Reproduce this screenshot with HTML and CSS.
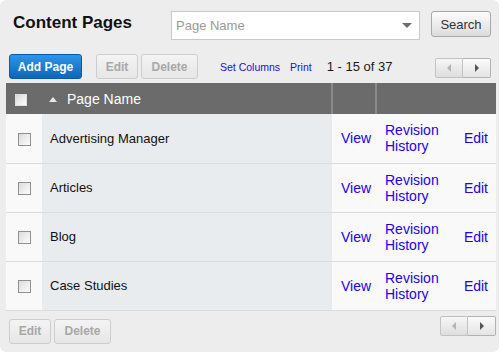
FILE: index.html
```html
<!DOCTYPE html>
<html>
<head>
<meta charset="utf-8">
<title>Content Pages</title>
<link rel="stylesheet" href="styles.css">
</head>
<body>
<div class="panel">
	<div class="top">
		<h1 class="title">Content Pages</h1>
		<div class="picker">
			<span class="placeholder">Page Name</span>
			<span class="caret"></span>
		</div>
		<button class="btn">Search</button>
	</div>

	<div class="toolbar">
		<button class="btn primary">Add Page</button>
		<button class="btn off edit-btn">Edit</button>
		<button class="btn off">Delete</button>
		<a class="small-link cols" href="#">Set Columns</a>
		<a class="small-link" href="#">Print</a>
		<span class="count">1 - 15 of 37</span>
		<div class="pager">
			<span class="pg prev"><i class="tri left"></i></span><span class="pg next"><i class="tri right"></i></span>
		</div>
	</div>

	<table class="grid">
		<thead>
			<tr>
				<th class="c-check"><span class="box"></span></th>
				<th class="c-name"><span class="sort"></span>Page Name</th>
				<th class="c-view"></th>
				<th class="c-acts"></th>
			</tr>
		</thead>
		<tbody>
			<tr>
				<td class="c-check"><span class="box"></span></td>
				<td class="c-name">Advertising Manager</td>
				<td class="c-view"><a href="#">View</a></td>
				<td class="c-acts"><div class="acts"><a href="#">Revision<br>History</a><a href="#">Edit</a></div></td>
			</tr>
			<tr>
				<td class="c-check"><span class="box"></span></td>
				<td class="c-name">Articles</td>
				<td class="c-view"><a href="#">View</a></td>
				<td class="c-acts"><div class="acts"><a href="#">Revision<br>History</a><a href="#">Edit</a></div></td>
			</tr>
			<tr>
				<td class="c-check"><span class="box"></span></td>
				<td class="c-name">Blog</td>
				<td class="c-view"><a href="#">View</a></td>
				<td class="c-acts"><div class="acts"><a href="#">Revision<br>History</a><a href="#">Edit</a></div></td>
			</tr>
			<tr>
				<td class="c-check"><span class="box"></span></td>
				<td class="c-name">Case Studies</td>
				<td class="c-view"><a href="#">View</a></td>
				<td class="c-acts"><div class="acts"><a href="#">Revision<br>History</a><a href="#">Edit</a></div></td>
			</tr>
		</tbody>
	</table>

	<div class="bottom">
		<button class="btn off edit-btn">Edit</button>
		<button class="btn off">Delete</button>
		<div class="pager low">
			<span class="pg prev"><i class="tri left"></i></span><span class="pg next"><i class="tri right"></i></span>
		</div>
	</div>
</div>
</body>
</html>
```

FILE: styles.css
```css
*
{
	box-sizing: border-box;
}
body
{
	margin: 0;
	background: #ffffff;
	font-family: "Liberation Sans", Arial, sans-serif;
	color: #1a1a1a;
}
.panel{
	width: 499px;
	height: 352px;
	background: #ededed;
	border-radius: 6px;
	padding: 11px 3px 0 6px;
}

/* top row */
.top{
	display: flex;
	align-items: flex-start;
	height: 39px;
}
.title{
	margin: 2px 0 0 7px;
	font-size: 17px;
	font-weight: bold;
	color: #111;
	width: 158px;
}
.picker{
	width: 249px;
	height: 29px;
	background: #fff;
	border: 1px solid #c9c9c9;
	display: flex;
	align-items: center;
	justify-content: space-between;
	padding: 0 7px 0 4px;
}
.placeholder{
	color: #9a9a9a;
	font-size: 13px;
}
.caret{
	width: 0;
	height: 0;
	border-left: 5px solid transparent;
	border-right: 5px solid transparent;
	border-top: 5px solid #6e6e6e;
}
.btn{
	font-family: inherit;
	font-size: 12px;
	font-weight: bold;
	height: 25px;
	padding: 0;
	white-space: nowrap;
	border: 1px solid #a9a9a9;
	border-radius: 3px;
	background: linear-gradient(#fdfdfd, #dcdcdc);
	color: #333;
}
.top .btn{
	margin-left: 11px;
	width: 60px;
	height: 26px;
	font-weight: normal;
	font-size: 13px;
}
.btn.off{
	color: #a8a8a8;
	border-color: #cdcdcd;
	background: linear-gradient(#f4f4f4, #e6e6e6);
}
.btn.primary{
	width: 73px;
	margin-left: 3px;
	color: #fff;
	border-color: #0a5aa8;
	background: linear-gradient(#2f95e6, #0b66bd);
}

/* toolbar */
.toolbar{
	display: flex;
	align-items: center;
	height: 33px;
}
.toolbar .edit-btn{
	margin-left: 14px;
	width: 42px;
}
.toolbar .btn.off{
	margin-right: 3px;
}
.toolbar .btn.off + .btn.off{
	width: 57px;
}
.small-link{
	font-size: 10.5px;
	color: #1a0ddf;
	text-decoration: none;
	margin-left: 10px;
}
.small-link.cols{
	margin-left: 19px;
}
.count{
	font-size: 13px;
	margin-left: 15px;
}
.pager{
	margin-left: auto;
	margin-right: 5px;
	display: flex;
	margin-top: 2px;
}
.pg{
	width: 28px;
	height: 20px;
	border: 1px solid #c3c3c3;
	background: linear-gradient(#f6f6f6, #dedede);
	display: flex;
	align-items: center;
	justify-content: center;
}
.pg.prev{
	border-radius: 2px 0 0 2px;
}
.pg.next{
	border-left: 0;
	border-color: #b2b2b2;
	background: linear-gradient(#fbfbfb, #e4e4e4);
	border-radius: 0 2px 2px 0;
}
.tri{
	width: 0;
	height: 0;
	border-top: 4px solid transparent;
	border-bottom: 4px solid transparent;
}
.tri.left{
	border-right: 4px solid #b4b4b4;
}
.tri.right{
	border-left: 4px solid #555;
}

/* table */
.grid{
	width: 490px;
	border-collapse: collapse;
	table-layout: fixed;
	margin-top: 0;
	font-size: 13px;
}
.grid th{
	background: #6b6b6b;
	height: 31px;
	color: #fff;
	font-weight: normal;
	font-size: 14px;
	text-align: left;
	padding: 0;
}
.grid th.c-view,
.grid th.c-acts{
	border-left: 2px solid #8a8a8a;
}
.grid td{
	height: 49px;
	border-bottom: 1px solid #dcdcdc;
	padding: 0;
	background: #f9f9f9;
}
.grid .c-check{
	width: 36px;
	text-align: center;
}
.grid th.c-check{
	text-align: left;
	padding-left: 9px;
}
.grid .c-name{
	width: 290px;
}
.grid td.c-name{
	background: #e9ecef;
	padding-left: 8px;
	color: #111;
}
.grid th.c-name{
	padding-left: 7px;
}
.grid .c-view{
	width: 44px;
}
.grid td.c-view{
	padding-left: 9px;
}
.grid a{
	color: #2200ee;
	text-decoration: none;
	font-size: 14px;
}
.acts{
	display: flex;
	justify-content: space-between;
	align-items: center;
	padding: 0 8px 0 9px;
	line-height: 16px;
}
.box{
	display: inline-block;
	width: 13px;
	height: 13px;
	border: 1px solid #8f8f8f;
	background: linear-gradient(135deg, #dcdcdc, #fdfdfd);
	vertical-align: middle;
}
th .box{
	width: 12px;
	height: 12px;
	border-color: #e0e0e0;
	background: linear-gradient(135deg, #d8d8d8, #ffffff);
}
.sort{
	display: inline-block;
	width: 0;
	height: 0;
	border-left: 4px solid transparent;
	border-right: 4px solid transparent;
	border-bottom: 5px solid #e8e8e8;
	margin-right: 10px;
	vertical-align: 2px;
}

/* bottom */
.bottom{
	display: flex;
	align-items: flex-start;
	padding-top: 8px;
}
.bottom .edit-btn{
	margin-left: 3px;
	width: 42px;
	margin-right: 3px;
}
.bottom .btn.off + .btn.off{
	width: 57px;
}
.pager.low{
	margin-top: -3px;
	margin-right: 0;
}
```
